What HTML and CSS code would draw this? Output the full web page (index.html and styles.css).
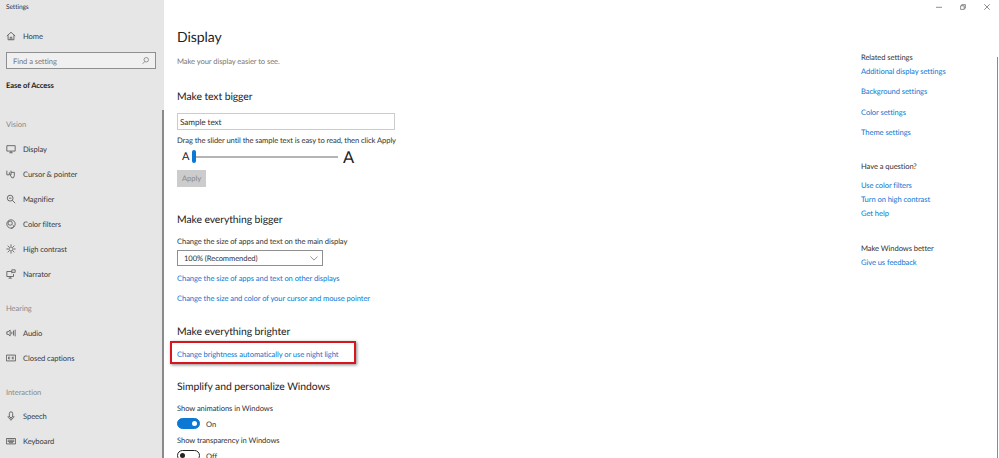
FILE: index.html
```html
<!DOCTYPE html>
<html lang="en">
	<head>
		<meta charset="utf-8" />
		<meta name="viewport" content="width=device-width, initial-scale=1.0" />
		<title>Settings</title>
		<link rel="stylesheet" href="styles.css">
	</head>

	<body>
		<nav class="sidebar">
			<div class="app-title">Settings</div>
			<a class="nav-item home">
				<svg viewBox="0 0 12 12"><path d="M1 6 6 1.500 11 6M2.500 5v5.500h7V5M5 10.500V7.500h2v3"/></svg>
				Home
			</a>
			<div class="search">
				<span>Find a setting</span>
				<svg viewBox="0 0 12 12"><circle cx="7" cy="5" r="3"/><path d="M5 7.500 2 10.500"/></svg>
			</div>
			<div class="current">Ease of Access</div>

			<h3 class="group vision">Vision</h3>
			<a class="nav-item">
				<svg viewBox="0 0 12 12"><path d="M1 2h10v6.500H1zM4 10.500h4M6 8.500v2"/></svg>
				Display
			</a>
			<a class="nav-item">
				<svg viewBox="0 0 12 12"><path d="M1 2v5M1 7h3V4M6 2v5l-1-1M6 4h4v4l-1 2.500H7L5 7"/></svg>
				Cursor &amp; pointer
			</a>
			<a class="nav-item">
				<svg viewBox="0 0 12 12"><circle cx="5" cy="5" r="3.500"/><path d="M3.500 5h3M7.500 7.500l3.500 3.500"/></svg>
				Magnifier
			</a>
			<a class="nav-item">
				<svg viewBox="0 0 12 12"><circle cx="6" cy="6" r="5"/><circle cx="5" cy="5" r="2.500"/><path d="M6 11c3 0 4-3 2-4"/></svg>
				Color filters
			</a>
			<a class="nav-item">
				<svg viewBox="0 0 12 12"><circle cx="6" cy="6" r="2.500"/><path d="M6 .5v2M6 9.500v2M.5 6h2M9.500 6h2M2 2l1.500 1.500M8.500 8.500 10 10M10 2 8.500 3.500M3.500 8.500 2 10"/></svg>
				High contrast
			</a>
			<a class="nav-item">
				<svg viewBox="0 0 12 12"><path d="M7 3H1v6h8V6M3 11h4M5 9v2M7 1h4v3H8L7 5z"/></svg>
				Narrator
			</a>

			<h3 class="group">Hearing</h3>
			<a class="nav-item">
				<svg viewBox="0 0 12 12"><path d="M1 4.500h1.500L5 2.500v7l-2.500-2H1zM7 4.500v3M9 3v6M11 2v8"/></svg>
				Audio
			</a>
			<a class="nav-item">
				<svg viewBox="0 0 12 12"><path d="M.5 2.500h11v7H.5zM5 5H3v2h2M9.500 5h-2v2h2"/></svg>
				Closed captions
			</a>

			<h3 class="group">Interaction</h3>
			<a class="nav-item">
				<svg viewBox="0 0 12 12"><rect x="4" y="1" width="4" height="7" rx="2"/><path d="M2.500 6c0 5 7 5 7 0M6 9.500V11.500"/></svg>
				Speech
			</a>
			<a class="nav-item">
				<svg viewBox="0 0 12 12"><path d="M.5 3h11v6.500H.5zM2 5h8M2 6.500h8M3.500 8h5"/></svg>
				Keyboard
			</a>
			<div class="side-scroll"></div>
		</nav>

		<main class="content">
			<h1>Display</h1>
			<p class="subtitle">Make your display easier to see.</p>

			<h2 class="first">Make text bigger</h2>
			<div class="sample">Sample text</div>
			<p class="hint">Drag the slider until the sample text is easy to read, then click Apply</p>
			<div class="slider">
				<span class="small-a">A</span>
				<div class="track"><span class="thumb"></span></div>
				<span class="big-a">A</span>
			</div>
			<div class="apply">Apply</div>

			<h2 class="bigger">Make everything bigger</h2>
			<p class="label">Change the size of apps and text on the main display</p>
			<div class="select">
				<span>100% (Recommended)</span>
				<svg viewBox="0 0 10 6"><path d="M.5.500 5 5 9.500.500"/></svg>
			</div>
			<a class="link size-link">Change the size of apps and text on other displays</a>
			<a class="link cursor-link">Change the size and color of your cursor and mouse pointer</a>

			<h2 class="brighter">Make everything brighter</h2>
			<div class="callout">
				<a class="link">Change brightness automatically or use night light</a>
			</div>

			<h2 class="simplify">Simplify and personalize Windows</h2>
			<p class="label anim">Show animations in Windows</p>
			<div class="toggle-row">
				<span class="toggle on"></span>
				<span>On</span>
			</div>
			<p class="label transp">Show transparency in Windows</p>
			<div class="toggle-row">
				<span class="toggle"></span>
				<span>Off</span>
			</div>
		</main>

		<aside class="related">
			<div class="win-buttons">
				<svg viewBox="0 0 10 10"><path d="M0 5.500h10"/></svg>
				<svg viewBox="0 0 10 10"><path d="M1 3h6v6H1zM3 3V1h6v6H7"/></svg>
				<svg viewBox="0 0 10 10"><path d="M.5.500l9 9M9.500.500l-9 9"/></svg>
			</div>
			<h4 class="related-title">Related settings</h4>
			<a class="link first-link">Additional display settings</a>
			<a class="link gap">Background settings</a>
			<a class="link gap">Color settings</a>
			<a class="link gap">Theme settings</a>

			<h4 class="question">Have a question?</h4>
			<a class="link q-first">Use color filters</a>
			<a class="link q-next">Turn on high contrast</a>
			<a class="link q-next">Get help</a>

			<h4 class="better">Make Windows better</h4>
			<a class="link first-link">Give us feedback</a>
			<div class="main-scroll"></div>
		</aside>
	</body>
</html>
```

FILE: styles.css
```css
* {
	box-sizing: border-box;
}

html,
body {
	height: 458px;
	margin: 0;
	overflow: hidden;
}

body {
	display: flex;
	font-family: "Lato", sans-serif;
	font-size: 7.600px;
	letter-spacing: -0.08px;
	line-height: 12px;
	color: #333;
	background: #fff;
	white-space: nowrap;
	text-rendering: geometricPrecision;
}

h1,
h2,
h3,
h4,
p {
	margin: 0;
	font-weight: normal;
}

.link {
	display: block;
	color: #0a78d4;
}

/* sidebar */
.sidebar {
	position: relative;
	flex: none;
	width: 164px;
	padding-top: 1px;
	background: #e6e6e6;
}

.app-title {
	padding-left: 6px;
	font-size: 6.600px;
}

.nav-item {
	display: flex;
	align-items: center;
	gap: 7px;
	height: 25px;
	padding-left: 6px;
	color: #3a3a3a;
}

.nav-item svg {
	width: 10px;
	height: 10px;
	flex: none;
	fill: none;
	stroke: #555;
	stroke-width: 1;
}

.home {
	margin-top: 10px;
	padding-left: 6px;
}

.search {
	display: flex;
	justify-content: space-between;
	align-items: center;
	width: 150px;
	height: 17px;
	margin: 4px 0 0 6px;
	padding: 0 5px 0 6px;
	border: 1px solid #8f8f8f;
	background: #f0f0f0;
	color: #777;
}

.search svg {
	width: 9px;
	height: 9px;
	fill: none;
	stroke: #777;
}

.current {
	margin-top: 10px;
	padding-left: 6px;
	font-weight: 700;
	color: #222;
}

.group {
	margin-top: 15.500px;
	padding-left: 6px;
	height: 18px;
	font-size: 7.600px;
	color: #8a8a8a;
}

.vision {
	margin-top: 27px;
	height: 18.500px;
}

.side-scroll {
	position: absolute;
	top: 110px;
	bottom: 0;
	right: 0;
	width: 2px;
	background: #8a8a8a;
}

/* main column */
.content {
	flex: 1;
	padding: 0 0 0 13px;
}

h1 {
	margin-top: 26px;
	font-size: 14px;
	line-height: 22px;
	color: #222;
}

.subtitle {
	margin-top: 7px;
	color: #777;
}

h2 {
	font-size: 10.400px;
	line-height: 16px;
	color: #222;
}

.first {
	margin-top: 22px;
}

.sample {
	width: 218px;
	height: 17px;
	margin-top: 8px;
	padding-left: 2px;
	border: 1px solid #ccc;
	line-height: 16px;
	font-size: 8.200px;
}

.hint {
	margin-top: 4px;
}

.slider {
	display: flex;
	align-items: center;
	height: 20px;
	margin-top: 1px;
	padding-left: 5px;
}

.small-a {
	width: 10px;
	font-size: 11px;
	color: #222;
}

.track {
	position: relative;
	width: 146px;
	height: 2px;
	background: #b4b4b4;
}

.thumb {
	position: absolute;
	top: -6px;
	left: 0;
	width: 4px;
	height: 13px;
	border-radius: 2px;
	background: #0a78d4;
}

.big-a {
	margin-left: 5px;
	font-size: 16.500px;
	color: #222;
}

.apply {
	width: 29px;
	height: 17px;
	margin-top: 3px;
	background: #ccc;
	color: #888;
	text-align: center;
	line-height: 17px;
}

.bigger {
	margin-top: 25px;
}

.label {
	color: #333;
}

.bigger + .label {
	margin-top: 7px;
}

.select {
	display: flex;
	justify-content: space-between;
	align-items: center;
	width: 146px;
	height: 16px;
	margin-top: 3px;
	padding: 0 4px 0 6px;
	border: 1px solid #8f8f8f;
}

.select svg {
	width: 8px;
	height: 5px;
	fill: none;
	stroke: #777;
}

.size-link {
	margin-top: 6px;
}

.cursor-link {
	margin-top: 8px;
}

.brighter {
	margin-top: 20px;
}

.callout {
	width: 186px;
	height: 23px;
	margin: 1px 0 0 -7px;
	padding: 6px 0 0 7px;
	border: 2px solid #d8141c;
	box-shadow: 1px 1px 3px #888;
}

.callout .link {
	margin: -1px 0 0 -2px;
}

.simplify {
	margin-top: 15px;
}

.anim {
	margin-top: 7px;
}

.toggle-row {
	display: flex;
	align-items: center;
	gap: 6px;
	height: 15px;
	margin-top: 2px;
}

.toggle {
	position: relative;
	width: 23px;
	height: 11px;
	border: 1.500px solid #222;
	border-radius: 6px;
}

.toggle::before {
	content: "";
	position: absolute;
	top: 1.500px;
	left: 2px;
	width: 5px;
	height: 5px;
	border-radius: 50%;
	background: #222;
}

.toggle.on {
	border-color: #0a78d4;
	background: #0a78d4;
}

.toggle.on::before {
	left: auto;
	right: 2px;
	background: #fff;
}

.transp {
	margin-top: 3px;
}

/* right column */
.related {
	position: relative;
	flex: none;
	width: 138px;
}

.win-buttons {
	display: flex;
	gap: 18px;
	justify-content: flex-end;
	padding: 4px 9px 0 0;
}

.win-buttons svg {
	width: 6px;
	height: 6px;
	fill: none;
	stroke: #444;
	stroke-width: 1;
}

.related-title {
	margin-top: 41px;
}

.first-link {
	margin-top: 2px;
}

.gap {
	margin-top: 8.300px;
}

.question {
	margin-top: 22px;
}

.q-first {
	margin-top: 7px;
}

.q-next {
	margin-top: 2px;
}

.better {
	margin-top: 23px;
}

.main-scroll {
	position: absolute;
	top: 57px;
	bottom: 0;
	right: 1px;
	width: 1px;
	background: #8a8a8a;
}
```
